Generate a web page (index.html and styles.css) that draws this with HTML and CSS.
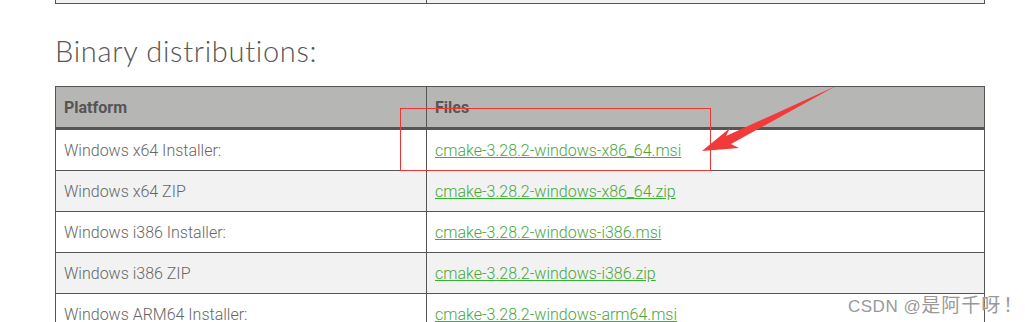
FILE: index.html
```html
<!DOCTYPE html>
<html>
<head>
<meta charset="utf-8">
<link rel="stylesheet" href="styles.css">
</head>
<body>
<div class="page">
  <div class="prev-table">
    <div class="prev-cell prev-first"></div>
    <div class="prev-cell"></div>
  </div>
  <h2 class="title">Binary distributions:</h2>
  <table class="dist">
    <colgroup><col class="col-a"><col></colgroup>
    <thead>
      <tr><th>Platform</th><th class="col-files">Files</th></tr>
    </thead>
    <tbody>
      <tr><td>Windows x64 Installer:</td><td class="col-files"><a href="#">cmake-3.28.2-windows-x86_64.msi</a></td></tr>
      <tr><td>Windows x64 ZIP</td><td class="col-files"><a href="#">cmake-3.28.2-windows-x86_64.zip</a></td></tr>
      <tr><td>Windows i386 Installer:</td><td class="col-files"><a href="#">cmake-3.28.2-windows-i386.msi</a></td></tr>
      <tr><td>Windows i386 ZIP</td><td class="col-files"><a href="#">cmake-3.28.2-windows-i386.zip</a></td></tr>
      <tr><td>Windows ARM64 Installer:</td><td class="col-files"><a href="#">cmake-3.28.2-windows-arm64.msi</a></td></tr>
    </tbody>
  </table>
  <div class="highlight-box"></div>
  <svg class="arrow" width="1025" height="322" viewBox="0 0 1025 322">
    <polygon points="836,86 726,136 730,128 702,151 739,148 731,144" fill="#f23a3a"/>
  </svg>
  <div class="watermark">CSDN @<span class="wm-cjk">是阿千呀</span><span class="wm-bang">！</span></div>
</div>
</body>
</html>
```
FILE: styles.css
```css
html, body {
  margin: 0;
  padding: 0;
  background: #ffffff;
}
.page {
  position: relative;
  width: 1025px;
  height: 322px;
  overflow: hidden;
  padding-left: 55px;
  box-sizing: border-box;
}
.prev-table {
  display: flex;
  width: 930px;
  height: 4px;
  box-sizing: border-box;
  border: 1px solid #555;
  border-top: none;
  background: #f2f2f2;
}
.prev-cell {
  flex: 1;
}
.prev-first {
  flex: 0 0 370px;
  border-right: 1px solid #555;
}
.title {
  margin: 30px 0 0 0;
  height: 52px;
  font-family: "Lato", "Open Sans", sans-serif;
  font-weight: 300;
  font-size: 29px;
  line-height: 34px;
  color: #555;
  letter-spacing: 0.7px;
}
.dist {
  border-collapse: collapse;
  table-layout: fixed;
  width: 930px;
  font-family: Roboto, "Liberation Sans", sans-serif;
  font-size: 16px;
}
.dist .col-a {
  width: 371px;
}
.dist th {
  background: #b6b6b4;
  color: #555;
  font-weight: 700;
  text-align: left;
  height: 40px;
  padding: 0 8px;
  border: 1px solid #555;
  border-bottom: 3px solid #555;
}
.dist .col-files {
  padding-left: 8px;
}
.dist td {
  height: 40px;
  padding: 0 8px;
  border: 1px solid #555;
  color: #666;
  font-weight: 300;
}
.dist tbody tr:nth-child(even) td {
  background: #f2f2f2;
}
.dist a {
  color: #4aa63a;
  text-decoration: underline;
  text-decoration-color: #2fb52f;
  font-weight: 300;
}
.highlight-box {
  position: absolute;
  left: 400px;
  top: 108px;
  width: 311px;
  height: 63px;
  box-sizing: border-box;
  border: 1px solid #f03535;
}
.arrow {
  position: absolute;
  left: 0;
  top: 0;
}
.watermark {
  position: absolute;
  left: 848px;
  top: 290px;
  font-family: "Liberation Sans", "Noto Sans CJK SC", sans-serif;
  font-size: 17px;
  color: #999;
  letter-spacing: 0.5px;
  text-shadow: 0 0 1px #fff;
}
.wm-cjk {
  font-size: 19px;
  letter-spacing: 1px;
}
.wm-bang {
  font-size: 19px;
  margin-left: 2px;
}
```
